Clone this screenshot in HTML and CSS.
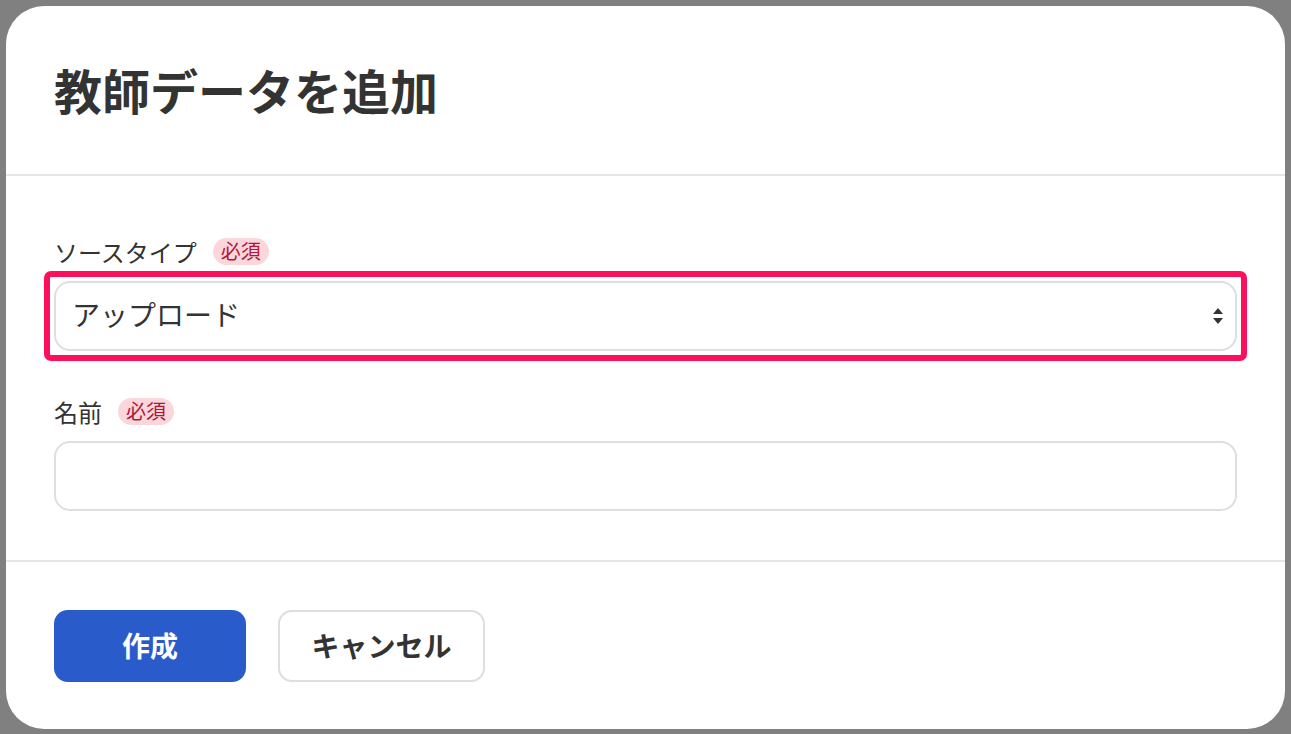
FILE: index.html
```html
<!DOCTYPE html>
<html lang="ja">
<head>
    <meta charset="UTF-8">
    <meta name="viewport" content="width=device-width, initial-scale=1.0">
    <title>教師データを追加</title>
    <link rel="stylesheet" href="styles.css">
</head>
<body>
    <div class="modal">
        <div class="modal-header">
            <h1>教師データを追加</h1>
        </div>

        <form class="modal-body" id="trainingForm">
            <div class="field">
                <label class="field-label" for="sourceType">
                    ソースタイプ <span class="badge">必須</span>
                </label>
                <!-- Highlighted select -->
                <div class="select-wrap focus-ring">
                    <select id="sourceType" name="sourceType">
                        <option selected>アップロード</option>
                        <option>URL</option>
                    </select>
                    <svg class="select-arrows" width="10" height="16" viewBox="0 0 10 16">
                        <path d="M5 0 L10 6 L0 6 Z" fill="#333"/>
                        <path d="M0 10 L10 10 L5 16 Z" fill="#333"/>
                    </svg>
                </div>
            </div>

            <div class="field">
                <label class="field-label" for="name">
                    名前 <span class="badge">必須</span>
                </label>
                <input type="text" id="name" name="name">
            </div>
        </form>

        <div class="modal-footer">
            <button type="submit" form="trainingForm" class="btn btn-primary">作成</button>
            <button type="button" class="btn btn-secondary">キャンセル</button>
        </div>
    </div>
</body>
</html>
```

FILE: styles.css
```css
/* Dialog over a dimmed page */
* {
    box-sizing: border-box;
}

body {
    margin: 0;
    padding: 6px;
    background-color: #808080;
    font-family: "Noto Sans CJK JP", "Noto Sans", sans-serif;
    color: #333;
}

.modal {
    width: 1279px;
    height: 723px;
    background: #ffffff;
    border-radius: 38px;
    overflow: hidden;
}

.modal-header {
    height: 170px;
    display: flex;
    align-items: center;
    padding: 0 48px 2px;
    border-bottom: 2px solid #e6e6e6;
}

.modal-header h1 {
    margin: 0;
    font-size: 48px;
    font-weight: 700;
    line-height: 1;
    color: #333;
}

.modal-body {
    padding: 61px 48px 49px;
    display: flex;
    flex-direction: column;
    gap: 46px;
    border-bottom: 2px solid #e6e6e6;
}

.field {
    display: flex;
    flex-direction: column;
    gap: 12px;
}

.field-label {
    display: flex;
    align-items: center;
    gap: 16px;
    height: 32px;
    padding-bottom: 3px;
    font-size: 24px;
    color: #333;
}

.badge {
    display: inline-block;
    height: 27px;
    line-height: 26px;
    padding: 0 8px;
    border-radius: 14px;
    background: #fbd6db;
    color: #b0173a;
    font-size: 20px;
}

.select-wrap {
    position: relative;
}

/* Pink ring drawn around the active field */
.focus-ring::after {
    content: "";
    position: absolute;
    top: -10px;
    right: -10px;
    bottom: -10px;
    left: -10px;
    border: 6px solid #fd0f5b;
    border-radius: 7px;
    pointer-events: none;
}

select,
input {
    display: block;
    width: 100%;
    height: 70px;
    margin: 0;
    padding: 0 16px 4px;
    font-family: inherit;
    font-size: 28px;
    color: #333;
    background: #fff;
    border: 2px solid #dedede;
    border-radius: 16px;
    outline: none;
}

select {
    appearance: none;
    -webkit-appearance: none;
}

.select-arrows {
    position: absolute;
    right: 14px;
    top: 27px;
}

.modal-footer {
    display: flex;
    gap: 32px;
    padding: 48px 48px;
}

.btn {
    height: 72px;
    padding-bottom: 4px;
    font-family: inherit;
    font-size: 28px;
    font-weight: 700;
    border-radius: 14px;
    cursor: pointer;
}

.btn-primary {
    width: 192px;
    background-color: #2a5bcb;
    color: #fff;
    border: none;
}

.btn-secondary {
    width: 207px;
    background-color: #fff;
    color: #333;
    border: 2px solid #dedede;
}
```
